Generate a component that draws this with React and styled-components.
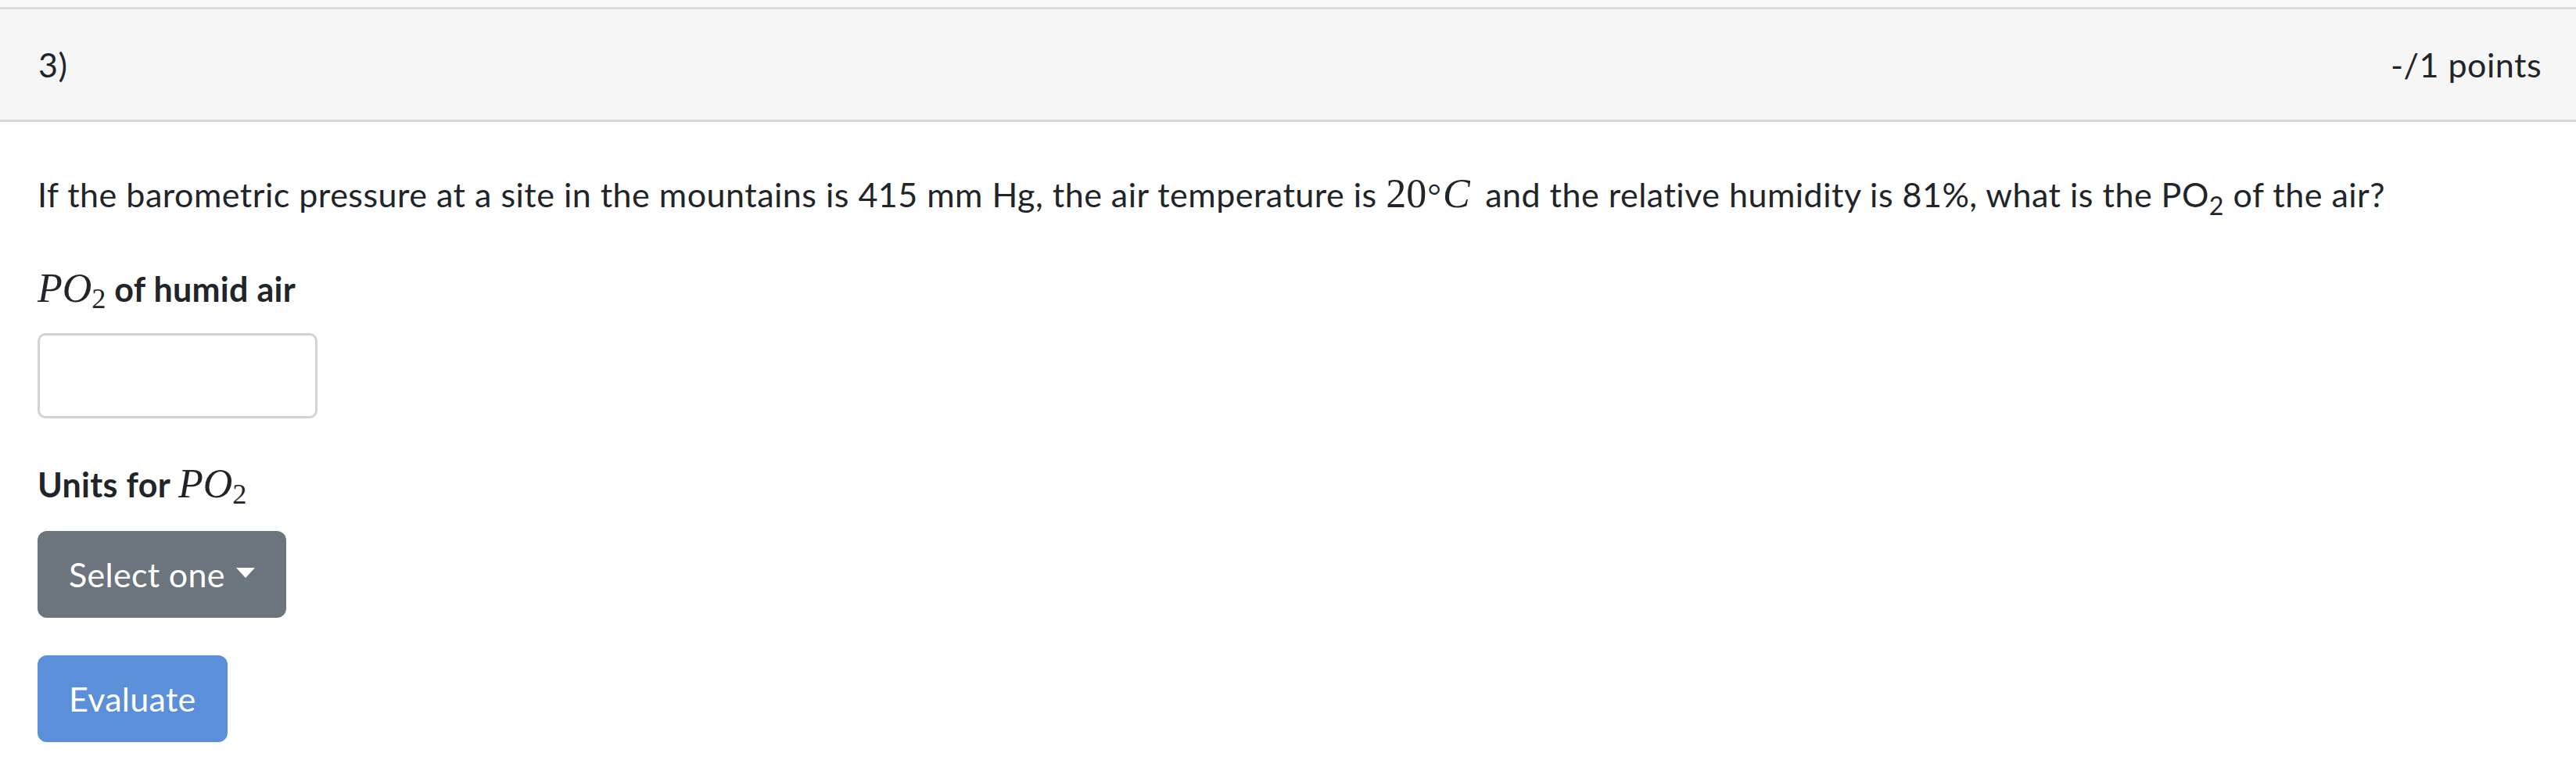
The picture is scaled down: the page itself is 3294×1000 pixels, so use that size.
import styled, { createGlobalStyle } from "styled-components";

const GlobalStyle = createGlobalStyle`
  html, body {
    margin: 0;
    padding: 0;
  }

  body {
    background-color: #f8f9fb;
    font-family: Lato, "Noto Sans", sans-serif;
    color: #212529;
  }
`;

const App = () => {
  return (
    <>
      <GlobalStyle />
      <Page>
        <Card>
          <CardHeader>
            <span>3)</span>
            <span>-/1 points</span>
          </CardHeader>
          <CardBody>
            <Question>
              If the barometric pressure at a site in the mountains is 415 mm
              Hg, the air temperature is{" "}
              <Math $trail>
                20<Degree>°</Degree>
                <Var>C</Var>
              </Math>{" "}
              and the relative humidity is 81%, what is the PO<Sub>2</Sub> of
              the air?
            </Question>

            <Label $gap="57px">
              <Math>
                <Var>PO</Var>
                <MathSub>2</MathSub>
              </Math>{" "}
              of humid air
            </Label>
            <AnswerInput type="text" />

            <Label $gap="53px">
              Units for{" "}
              <Math>
                <Var>PO</Var>
                <MathSub>2</MathSub>
              </Math>
            </Label>
            <Button $variant="secondary">
              Select one
              <Caret />
            </Button>

            <Button $variant="primary">Evaluate</Button>
          </CardBody>
        </Card>
      </Page>
    </>
  );
};

const Page = styled.main`
  padding-top: 9px;
  min-height: 1000px;
  box-sizing: border-box;
`;

const Card = styled.section`
  background-color: #ffffff;
  border-top: 3px solid #dcdcdc;
  min-height: 991px;
  box-sizing: border-box;
`;

const CardHeader = styled.header`
  height: 141px;
  display: flex;
  justify-content: space-between;
  align-items: center;
  padding: 0 44px 0 49px;
  background-color: #f6f6f6;
  border-bottom: 3px solid #d9d9d9;
  font-size: 43px;
  letter-spacing: 0.5px;
`;

const CardBody = styled.div`
  display: flex;
  flex-direction: column;
  align-items: flex-start;
  padding: 0 48px;
  font-size: 43px;
  line-height: 64px;
  letter-spacing: 0.5px;
`;

const Question = styled.p`
  margin: 61px 0 0;
`;

const Math = styled.span`
  font-family: "Liberation Serif", "DejaVu Serif", serif;
  font-size: 1.21em;
  font-weight: 400;
  line-height: 0;
  letter-spacing: 0;
  white-space: nowrap;
  padding-right: ${(p) => (p.$trail ? "8px" : "0")};
`;

const Var = styled.i`
  font-style: italic;
`;

const Degree = styled.span`
  font-size: 0.85em;
  margin: 0 2px 0 1px;
`;

const MathSub = styled.span`
  font-size: 0.7em;
  vertical-align: -0.22em;
`;

const Sub = styled.sub`
  font-size: 0.75em;
  line-height: 0;
  vertical-align: -0.3em;
`;

const Label = styled.label`
  display: block;
  margin-top: ${(p) => p.$gap};
  font-weight: 700;
  letter-spacing: 0.3px;
`;

const AnswerInput = styled.input`
  width: 358px;
  height: 109px;
  margin-top: 24px;
  box-sizing: border-box;
  border: 3px solid #d0d3d8;
  border-radius: 10px;
  background-color: #ffffff;
  outline: none;
`;

const Button = styled.button`
  display: flex;
  align-items: center;
  height: 111px;
  margin-top: ${(p) => (p.$variant === "primary" ? "48px" : "27px")};
  padding: 0 40px;
  border: none;
  border-radius: 12px;
  background-color: ${(p) => (p.$variant === "primary" ? "#5b8fd9" : "#6c757d")};
  color: #ffffff;
  font-family: Lato, "Noto Sans", sans-serif;
  font-size: 43px;
  letter-spacing: 0.3px;
  cursor: pointer;
`;

const Caret = styled.span`
  display: inline-block;
  margin-left: 14px;
  margin-top: -4px;
  border-top: 13px solid #ffffff;
  border-left: 12px solid transparent;
  border-right: 12px solid transparent;
`;

export default App;
